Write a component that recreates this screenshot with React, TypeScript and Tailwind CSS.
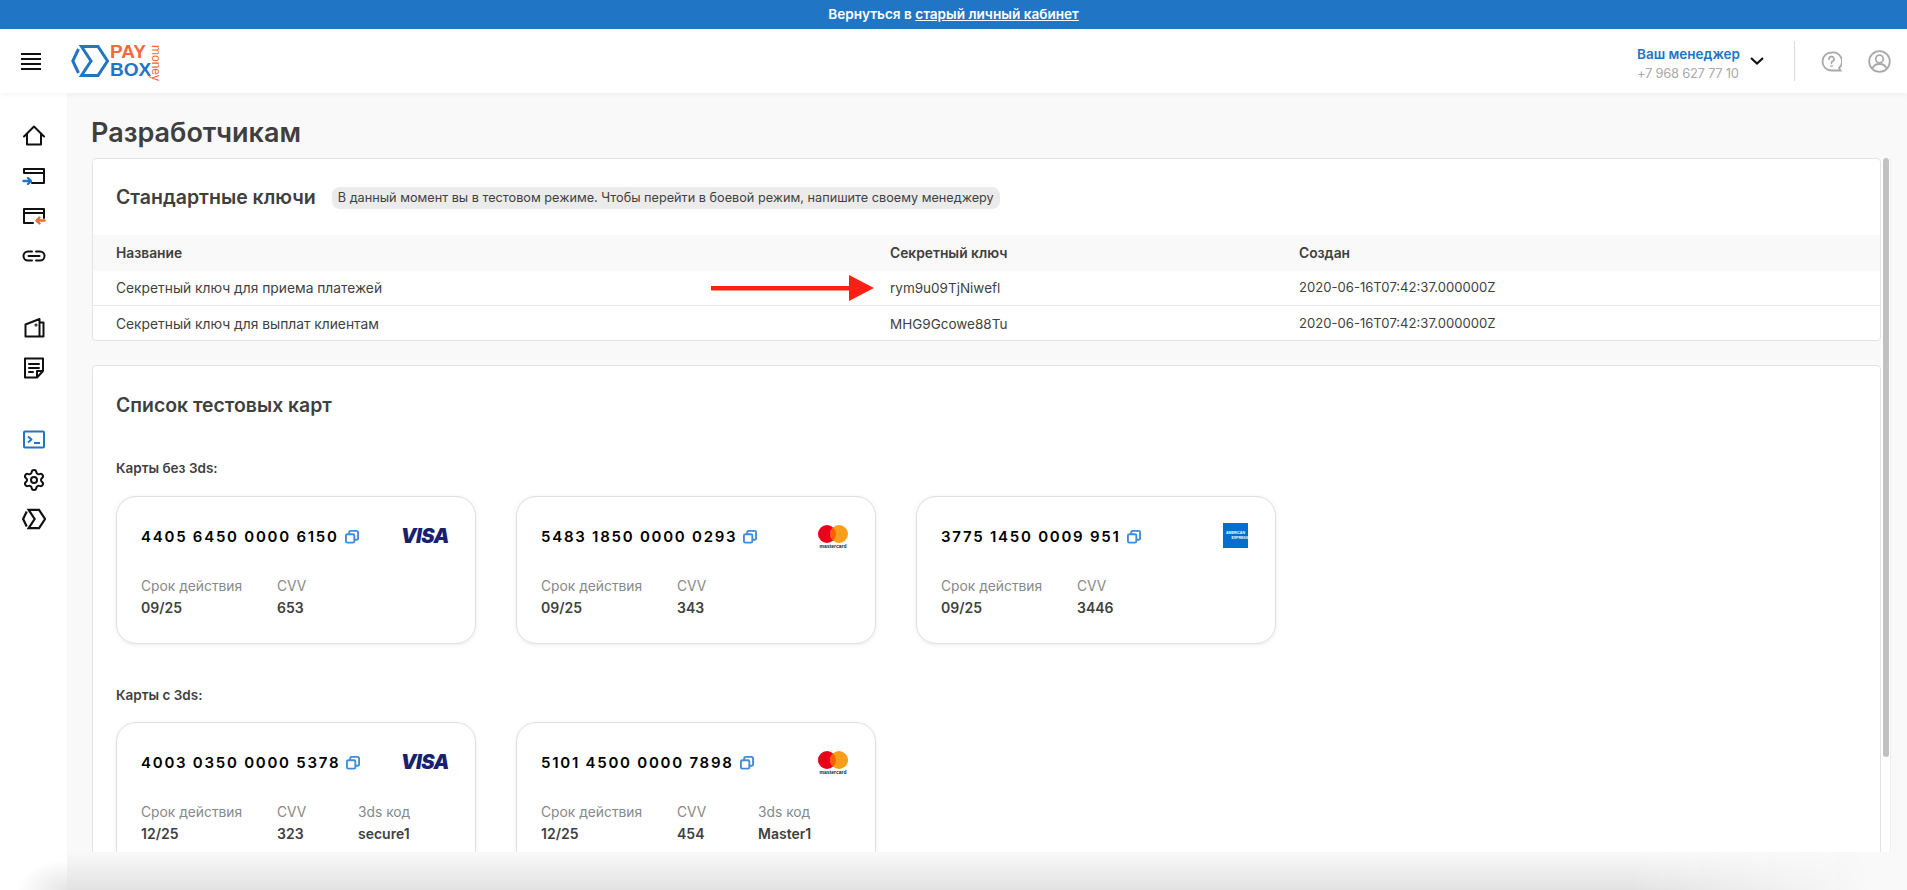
import React from "react";
import { Settings } from "lucide-react";

const ink = "#111";
const Ic = ({ children, cls = "" }: { children: React.ReactNode; cls?: string }) => (
  <svg width="24" height="24" viewBox="0 0 24 24" fill="none" stroke={ink} strokeWidth="2" strokeLinejoin="round" strokeLinecap="round" className={cls}>
    {children}
  </svg>
);

const Hex = ({ color, w, h, sw }: { color: string; w: number; h: number; sw: number }) => (
  <svg width={w} height={h} viewBox="0 0 38 32" fill="none" stroke={color} strokeWidth={sw} strokeLinejoin="miter">
    <path d="M7.500 4 L1.800 16 L7.500 28" />
    <path d="M10.500 1.500 H27 L36.500 16 L27 30.500 H10.500 L20 16 Z" />
  </svg>
);

const sidebarTop = [
  <Ic key="h"><path d="M2 12.500 12 2.500l10 10M5 10v10.500h14V10" /></Ic>,
  <Ic key="p"><path d="M2 9V5h20v14H10M2 9h20" /><path d="M1.500 17h7" stroke="#2175c5" strokeWidth="2.400" /><path d="M6 14l3 3-3 3" stroke="#2175c5" strokeWidth="2.400" /></Ic>,
  <Ic key="r"><path d="M11 19H2V5h20v9M2 9h20" /><path d="M15 16.500h7.500" stroke="#f26a36" strokeWidth="2.400" /><path d="M17.500 13.500l-3 3 3 3" stroke="#f26a36" strokeWidth="2.400" /></Ic>,
  <Ic key="l"><path d="M10 7.500H6a4.500 4.500 0 0 0 0 9h4M14 7.500h4a4.500 4.500 0 0 1 0 9h-4M6.500 12h11" /></Ic>,
];
const sidebarMid = [
  <Ic key="w"><path d="M3.500 8.500 17.500 3v17.500M3.500 8.500V20.500H21.500V6.500h-4" /><circle cx="14" cy="9" r=".5" /></Ic>,
  <Ic key="d"><path d="M15 21.500H3V2.500h18V15l-6 6.500V15h6M7 8h10M7 12h10M7 16h4" /></Ic>,
];

const CopyIcon = () => (
  <svg width="14" height="14" viewBox="0 0 15 15" fill="none" stroke="#3f8bdc" strokeWidth="2" className="ml-[6px] mt-[-1px] shrink-0">
    <rect x="1" y="4.500" width="9" height="9" rx="1.500" />
    <path d="M4.500 4V2.500A1.500 1.500 0 0 1 6 1h6.500A1.500 1.500 0 0 1 14 2.500V9a1.500 1.500 0 0 1-1.500 1.500H10.500" />
  </svg>
);

const Visa = () => (
  <span className="italic font-black text-[20px] leading-[16px] tracking-[-0.5px] text-[#1a1f71] mt-[1px]">VISA</span>
);
const Mc = () => (
  <div className="flex flex-col items-center w-[30px] mt-[-2px] mr-[1px]">
    <svg width="30" height="18" viewBox="0 0 30 18">
      <circle cx="9" cy="9" r="9" fill="#eb001b" />
      <circle cx="21" cy="9" r="9" fill="#f79e1b" />
      <path d="M15 2.300a9 9 0 0 1 0 13.400a9 9 0 0 1 0-13.400z" fill="#ff5f00" />
    </svg>
    <span className="font-['Liberation_Sans',sans-serif] font-bold text-[5px] leading-[6px] text-[#222]">mastercard</span>
  </div>
);
const Amex = () => (
  <div className="w-[25px] h-[25px] mt-[-4px] mr-[1px] bg-[#016fd0] flex flex-col justify-center items-center text-white font-['Liberation_Sans',sans-serif] font-bold text-[3.500px] leading-[5px]">
    <span>AMERICAN</span>
    <span className="self-end">EXPRESS</span>
  </div>
);

type CardData = { num: string; logo: React.ReactNode; exp: string; cvv: string; code?: string };

const Card = ({ num, logo, exp, cvv, code }: CardData) => (
  <div className="w-[360px] h-[148px] shrink-0 bg-white border border-[#e0e0e0] rounded-[20px] shadow-[0_1px_4px_rgba(0,0,0,0.08)] pl-[24px] pr-[26px] pt-[30px]">
    <div className="flex justify-between items-start h-[20px]">
      <div className="flex items-center h-[20px]">
        <span className="text-[15px] leading-[20px] font-semibold tracking-[1.750px] text-black whitespace-nowrap">{num}</span>
        <CopyIcon />
      </div>
      {logo}
    </div>
    <div className="flex mt-[29px]">
      <div className="w-[136px]">
        <div className="text-[13.800px] leading-[20px] text-[#888]">Срок действия</div>
        <div className="text-[14px] leading-[20px] mt-[2px] font-semibold text-[#3f3f3f]">{exp}</div>
      </div>
      <div className="w-[81px]">
        <div className="text-[13.800px] leading-[20px] text-[#888]">CVV</div>
        <div className="text-[14px] leading-[20px] mt-[2px] font-semibold text-[#3f3f3f]">{cvv}</div>
      </div>
      {code && (
        <div>
          <div className="text-[13.800px] leading-[20px] text-[#888]">3ds код</div>
          <div className="text-[14px] leading-[20px] mt-[2px] font-semibold text-[#3f3f3f]">{code}</div>
        </div>
      )}
    </div>
  </div>
);

const rowCls = "grid grid-cols-[774px_409px_1fr] pl-[23px] items-center text-[#3f3f3f]";
const nameCls = "text-[13.800px]";
const keyCls = "text-[13.500px]";
const dateCls = "text-[13.100px]";

export default function App() {
  return (
    <div className="h-[890px] w-[1907px] flex flex-col overflow-hidden bg-[#f9f9f9] font-['Inter',sans-serif]">
      <div className="h-[29px] shrink-0 bg-[#2175c5] flex items-center justify-center text-white text-[13.600px] font-semibold">
        <span>Вернуться в&nbsp;<span className="underline">старый личный кабинет</span></span>
      </div>

      <header className="h-[64px] shrink-0 bg-white flex items-center shadow-[0_1px_6px_rgba(0,0,0,0.05)] z-10 relative">
        <div className="ml-[21px] w-[20px] flex flex-col gap-[3px]">
          <div className="h-[2px] bg-[#111]" />
          <div className="h-[2px] bg-[#111]" />
          <div className="h-[2px] bg-[#111]" />
          <div className="h-[2px] bg-[#111]" />
        </div>
        <div className="ml-[30px] flex items-center">
          <Hex color="#2175c5" w={38} h={32} sw={3} />
          <div className="ml-[1px] flex flex-col font-['Liberation_Sans',sans-serif] font-bold text-[19px] leading-[18px]">
            <span className="text-[#f4693a]">PAY</span>
            <span className="text-[#2175c5]">BOX</span>
          </div>
          <span className="[writing-mode:vertical-rl] font-['Liberation_Sans',sans-serif] text-[12px] leading-[10px] text-[#f4693a] h-[32px]">money</span>
        </div>
        <div className="ml-auto flex items-center">
          <div className="flex flex-col mt-[3px]">
            <span className="text-[13.500px] leading-[20px] font-semibold text-[#2175c5]">Ваш менеджер</span>
            <span className="text-[13px] leading-[18px] tracking-[-0.3px] text-[#aaa]">+7 968 627 77 10</span>
          </div>
          <svg width="14" height="8" viewBox="0 0 14 8" fill="none" stroke="#111" strokeWidth="2.200" className="ml-[10px]"><path d="M1 1l6 5.500L13 1" /></svg>
          <div className="w-px h-[40px] bg-[#ddd] ml-[30px]" />
          <svg width="21" height="21" viewBox="0 0 21 21" fill="none" stroke="#a9a9a9" strokeWidth="1.800" className="ml-[26px]">
            <path d="M10.500 1.500a9 9 0 1 0 0 18h9l-1.500-2.500a9 9 0 0 0-7.500-15.500z" />
            <path d="M8 8a2.500 2.500 0 1 1 3.600 2.300c-.8.400-1.100.9-1.100 1.700" strokeLinecap="round" />
            <circle cx="10.500" cy="15" r=".4" />
          </svg>
          <svg width="23" height="23" viewBox="0 0 23 23" fill="none" stroke="#a9a9a9" strokeWidth="1.800" className="ml-[26px] mr-[16px]">
            <circle cx="11.500" cy="11.500" r="10.300" />
            <circle cx="11.500" cy="9" r="3.800" />
            <path d="M4.500 18.500c1-3 3.500-4.500 7-4.500s6 1.500 7 4.500" />
          </svg>
        </div>
      </header>

      <div className="flex-1 flex min-h-0">
        <aside className="w-[67px] shrink-0 bg-white flex flex-col items-center pt-[31px] relative">
          <div className="flex flex-col gap-[16px]">{sidebarTop}</div>
          <div className="flex flex-col gap-[16px] mt-[48px]">{sidebarMid}</div>
          <div className="flex flex-col gap-[16px] mt-[48px]">
            <svg width="24" height="24" viewBox="0 0 24 24" fill="none" stroke="#2175c5" strokeWidth="2" strokeLinejoin="round"><rect x="2" y="3.500" width="20" height="16" rx="1" /><path d="M6 8.500l3.500 3-3.500 3" /><path d="M12 15h6" /></svg>
            <Settings size={24} color={ink} strokeWidth={2} />
            <Hex color={ink} w={24} h={22} sw={3.500} />
          </div>
          <div className="absolute left-0 bottom-0 w-[67px] h-[34px] bg-[radial-gradient(ellipse_50px_30px_at_100%_100%,rgba(0,0,0,0.1),rgba(0,0,0,0))]" />
        </aside>

        <main className="flex-1 min-w-0 flex flex-col">
          <div className="flex-1 min-h-0 flex flex-col pl-[25px] pr-[16px]">
            <h1 className="h-[65px] shrink-0 pt-[20px] text-[27px] leading-[40px] font-semibold text-[#3f3f3f] ml-[-1px]">Разработчикам</h1>
            <div className="flex-1 min-h-0 flex">
              <div className="w-[1789px] shrink-0 overflow-hidden flex flex-col gap-[24px]">
                <section className="bg-white border border-[#e3e3e3] rounded-[4px] shrink-0 h-[183px]">
                  <div className="h-[76px] flex items-center pl-[23px] pt-[2px]">
                    <h2 className="text-[19.500px] font-semibold text-[#3f3f3f]">Стандартные ключи</h2>
                    <span className="ml-[16px] h-[22px] px-[6px] rounded-[8px] bg-[#ebebeb] text-[12.700px] leading-[22px] text-[#3f3f3f]">В данный момент вы в тестовом режиме. Чтобы перейти в боевой режим, напишите своему менеджеру</span>
                  </div>
                  <div className={`${rowCls} h-[36px] bg-[#f9f9f9] font-semibold text-[13.800px]`}>
                    <span>Название</span><span>Секретный ключ</span><span>Создан</span>
                  </div>
                  <div className={`${rowCls} h-[35px] border-b border-[#e8e8e8]`}>
                    <span className={nameCls}>Секретный ключ для приема платежей</span>
                    <span className={`${keyCls} relative`}>
                      rym9u09TjNiwefl
                      <svg width="163" height="26" viewBox="0 0 163 26" className="absolute left-[-179px] top-[-3px]">
                        <rect x="0" y="11" width="140" height="4.500" fill="#ff2015" />
                        <path d="M138 0l25 13-25 13z" fill="#ff2015" />
                      </svg>
                    </span>
                    <span className={dateCls}>2020-06-16T07:42:37.000000Z</span>
                  </div>
                  <div className={`${rowCls} h-[34px] pt-[2px]`}>
                    <span className={nameCls}>Секретный ключ для выплат клиентам</span>
                    <span className={keyCls}>MHG9Gcowe88Tu</span>
                    <span className={dateCls}>2020-06-16T07:42:37.000000Z</span>
                  </div>
                </section>

                <section className="bg-white border border-[#e3e3e3] rounded-[4px] shrink-0 pl-[23px] pt-[26px] h-[600px]">
                  <h2 className="text-[19.400px] leading-[26px] font-semibold text-[#3f3f3f]">Список тестовых карт</h2>
                  <div className="mt-[40px] text-[13.500px] leading-[20px] font-semibold text-[#3f3f3f]">Карты без 3ds:</div>
                  <div className="flex gap-[40px] mt-[18px]">
                    <Card num="4405 6450 0000 6150" logo={<Visa />} exp="09/25" cvv="653" />
                    <Card num="5483 1850 0000 0293" logo={<Mc />} exp="09/25" cvv="343" />
                    <Card num="3775 1450 0009 951" logo={<Amex />} exp="09/25" cvv="3446" />
                  </div>
                  <div className="mt-[41px] text-[13.500px] leading-[20px] font-semibold text-[#3f3f3f]">Карты с 3ds:</div>
                  <div className="flex gap-[40px] mt-[17px]">
                    <Card num="4003 0350 0000 5378" logo={<Visa />} exp="12/25" cvv="323" code="secure1" />
                    <Card num="5101 4500 0000 7898" logo={<Mc />} exp="12/25" cvv="454" code="Master1" />
                  </div>
                </section>
              </div>
              <div className="w-[10px] shrink-0 bg-white border-r border-[#eee] pl-[2px]">
                <div className="w-[6px] h-[599px] rounded-[3px] bg-[#c1c1c1]" />
              </div>
            </div>
          </div>
          <div className="h-[38px] shrink-0 bg-[linear-gradient(to_bottom,#f9f9f9,#e2e2e2)] [mask-image:linear-gradient(to_right,black_85%,transparent_98%)]" />
        </main>
      </div>
    </div>
  );
}
